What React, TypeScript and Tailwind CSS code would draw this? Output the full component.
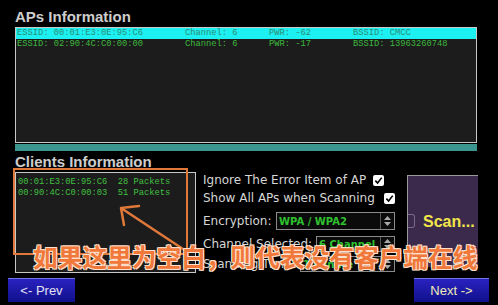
// Wireless scan panel: AP list, client list and scan options.
const aps = [
  { text: 'ESSID: 00:01:E3:0E:95:C6        Channel: 6      PWR: -62        BSSID: CMCC', active: true },
  { text: 'ESSID: 02:90:4C:C0:00:00        Channel: 6      PWR: -17        BSSID: 13963260748', active: false },
]

const clients = ['00:01:E3:0E:95:C6  28 Packets', '00:90:4C:C0:00:03  51 Packets']

function Check() {
  return (
    <span className="flex h-[11px] w-[11px] items-center justify-center rounded-[2px] bg-white">
      <svg width="9" height="9" viewBox="0 0 10 10">
        <path d="M1.5 5.2 L4 7.8 L8.6 1.8" fill="none" stroke="#000" strokeWidth="1.8" />
      </svg>
    </span>
  )
}

function Select({ value, width }: { value: string; width: string }) {
  return (
    <div className={`ml-auto flex h-full ${width} border border-[#8a8a8a] bg-[#0b0b0b]`}>
      <div className="flex flex-1 items-center pl-[2px] text-[10px] font-bold text-[#2fc22f]">{value}</div>
      <div className="flex w-[14px] flex-col items-center justify-center gap-[2px] border-l border-[#555]">
        <svg width="7" height="4" viewBox="0 0 7 4">
          <path d="M0 4 L3.5 0 L7 4Z" fill="#aaa" />
        </svg>
        <svg width="7" height="4" viewBox="0 0 7 4">
          <path d="M0 0 L3.5 4 L7 0Z" fill="#aaa" />
        </svg>
      </div>
    </div>
  )
}

export default function App() {
  return (
    <div className="relative h-[305px] w-[498px] overflow-hidden bg-black font-['Liberation_Sans',sans-serif]">
      <div className="pl-[15px] pr-[21px] pt-[6px]">
        <h2 className="h-[21px] text-[15px] font-bold leading-[21px] text-[#cdcdcd]">APs Information</h2>
        {/* AP list */}
        <div className="h-[116px] border border-[#c8c8c8] bg-[#1c1c1c] font-['Liberation_Mono',monospace] text-[8.75px] leading-[11px]">
          {aps.map((ap) => (
            <div
              key={ap.text}
              className={`whitespace-pre pl-[1px] ${ap.active ? 'bg-[#1cf0f0] text-[#2d8c74]' : 'text-[#3cb83c]'}`}
            >
              {ap.text}
            </div>
          ))}
        </div>
        <div className="mt-px h-[7px] bg-[#3c9690]" />
        <h2 className="h-[21px] text-[15px] font-bold leading-[21px] text-[#cdcdcd]">Clients Information</h2>
      </div>

      <div className="flex h-[101px] pl-[15px]">
        {/* client list */}
        <div className="w-[181px] border border-[#c8c8c8] bg-[#1c1c1c] pl-[2px] pt-[4px] font-['Liberation_Mono',monospace] text-[8.75px] leading-[11px] text-[#40c040]">
          {clients.map((c) => (
            <div key={c} className="whitespace-pre">
              {c}
            </div>
          ))}
        </div>

        {/* options */}
        <div className="ml-[7px] flex w-[194px] flex-col font-['DejaVu_Sans',sans-serif] text-[12px] text-[#d6d6d6]">
          <div className="flex h-[16px] items-center">
            <span>Ignore The Error Item of AP</span>
            <span className="ml-[7px]">
              <Check />
            </span>
          </div>
          <div className="flex h-[20px] items-center">
            <span>Show All APs when Scanning</span>
            <span className="ml-[9px]">
              <Check />
            </span>
          </div>
          <div className="mt-[4px] flex h-[18px] items-center pr-[2px]">
            <span>Encryption:</span>
            <Select value="WPA / WPA2" width="w-[119px]" />
          </div>
          <div className="mt-[6px] flex h-[16px] items-center pr-[2px]">
            <span>Channel Selected:</span>
            <Select value="6 Channel" width="w-[79px]" />
          </div>
          <div className="mt-[4px] flex h-[16px] items-center pr-[2px]">
            <span>Scanning Time:</span>
            <Select value="1 minute" width="w-[95px]" />
          </div>
        </div>

        {/* scan button */}
        <div className="relative ml-[10px] mt-[3px] flex h-[92px] w-[71px] items-center border-l border-t border-[#9a9a9a] bg-[#3b2a4b] pl-[15px]">
          <span className="absolute left-0 top-[38px] h-[14px] w-[7px] rounded-r-[3px] border border-l-0 border-[#7a6a8a]" />
          <span className="text-[16px] font-bold text-[#f2e64a]">Scan...</span>
        </div>
      </div>

      <div className="mt-[5px] flex justify-between pl-[8px] pr-[9px]">
        <button className="h-[24px] w-[67px] border-t border-[#6c78e8] bg-gradient-to-b from-[#2a22c0] to-[#10108c] text-[13px] text-[#e2e2f4]">
          &lt;- Prev
        </button>
        <button className="h-[24px] w-[75px] border-t border-[#6c78e8] bg-gradient-to-b from-[#2a22c0] to-[#10108c] text-[13px] text-[#ecebb4]">
          Next -&gt;
        </button>
      </div>

      {/* annotation overlay */}
      <div className="absolute left-[13px] top-[168px] h-[87px] w-[175px] border-2 border-[#e0783a]" />
      <svg className="absolute left-0 top-0" width="498" height="305" viewBox="0 0 498 305">
        <path d="M121 208 L186 251 M121 208 L139 206 M121 208 L124 225" fill="none" stroke="#e0783a" strokeWidth="2.5" strokeLinecap="round" />
      </svg>
      <div className="absolute left-[33px] top-[244px] whitespace-nowrap font-['Noto_Sans_CJK_SC',sans-serif] text-[24.7px] font-bold leading-none text-[#f0783a] [text-shadow:1px_1px_0_#ffe0cc,-1px_-1px_0_#ffe0cc,1px_-1px_0_#ffe0cc,-1px_1px_0_#ffe0cc]">
        如果这里为空白，则代表没有客户端在线
      </div>
    </div>
  )
}
